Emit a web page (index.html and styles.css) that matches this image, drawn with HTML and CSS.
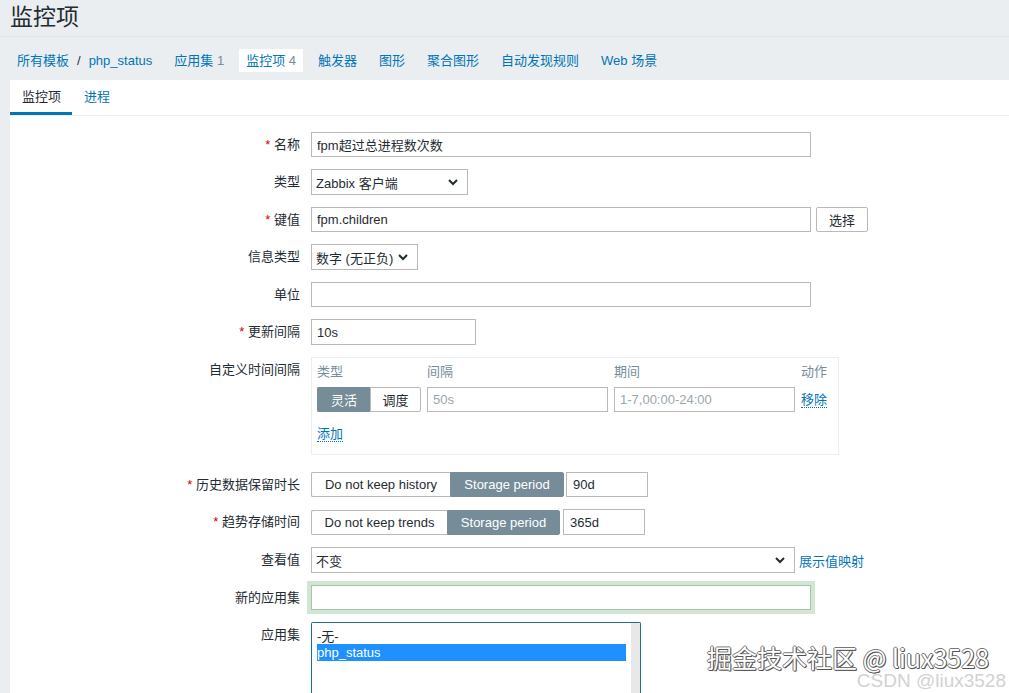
FILE: index.html
```html
<!DOCTYPE html>
<html lang="zh">
<head>
<meta charset="utf-8">
<title>监控项</title>
<link rel="stylesheet" href="styles.css">
</head>
<body>
<header class="page-header">
  <h1 class="page-title">监控项</h1>
</header>
<nav class="subnav">
  <div class="nav-item crumbs"><a class="link" href="#">所有模板</a><span class="sep">/</span><a class="link" href="#">php_status</a></div>
  <div class="nav-item"><a class="link" href="#">应用集</a> <span class="count">1</span></div>
  <div class="nav-item active"><a class="link" href="#">监控项</a> <span class="count">4</span></div>
  <div class="nav-item"><a class="link" href="#">触发器</a></div>
  <div class="nav-item"><a class="link" href="#">图形</a></div>
  <div class="nav-item"><a class="link" href="#">聚合图形</a></div>
  <div class="nav-item"><a class="link" href="#">自动发现规则</a></div>
  <div class="nav-item"><a class="link" href="#">Web 场景</a></div>
</nav>
<main class="panel">
  <div class="tabs">
    <div class="tab tab-active">监控项</div>
    <div class="tab"><a class="link" href="#">进程</a></div>
  </div>
  <form class="form">
    <label class="lbl"><span class="req">*</span> 名称</label>
    <div class="field"><input class="inp w500" type="text" value="fpm超过总进程数次数"></div>

    <label class="lbl">类型</label>
    <div class="field"><div class="sel w157"><span>Zabbix 客户端</span><svg class="chev" width="10" height="7" viewBox="0 0 10 7"><polyline points="1,1 5,5 9,1" fill="none" stroke="#1f2c33" stroke-width="2"/></svg></div></div>

    <label class="lbl"><span class="req">*</span> 键值</label>
    <div class="field row"><input class="inp w500" type="text" value="fpm.children"><button type="button" class="btn">选择</button></div>

    <label class="lbl">信息类型</label>
    <div class="field"><div class="sel w107"><span>数字 (无正负)</span><svg class="chev" width="10" height="7" viewBox="0 0 10 7"><polyline points="1,1 5,5 9,1" fill="none" stroke="#1f2c33" stroke-width="2"/></svg></div></div>

    <label class="lbl">单位</label>
    <div class="field"><input class="inp w500" type="text" value=""></div>

    <label class="lbl"><span class="req">*</span> 更新间隔</label>
    <div class="field"><input class="inp w165 h26" type="text" value="10s"></div>

    <label class="lbl">自定义时间间隔</label>
    <div class="field gap-after">
      <div class="intervals">
        <div class="ih">类型</div><div class="ih">间隔</div><div class="ih">期间</div><div class="ih">动作</div>
        <div class="seg seg-small"><span class="seg-btn on w53">灵活</span><span class="seg-btn w51">调度</span></div>
        <input class="inp ph" type="text" placeholder="50s">
        <input class="inp ph" type="text" placeholder="1-7,00:00-24:00">
        <div class="act"><a class="link dotted" href="#">移除</a></div>
        <div class="add"><a class="link dotted" href="#">添加</a></div>
      </div>
    </div>

    <label class="lbl"><span class="req">*</span> 历史数据保留时长</label>
    <div class="field row2"><div class="seg"><span class="seg-btn w139">Do not keep history</span><span class="seg-btn on w114">Storage period</span></div><input class="inp w82" type="text" value="90d"></div>

    <label class="lbl"><span class="req">*</span> 趋势存储时间</label>
    <div class="field row3"><div class="seg h26"><span class="seg-btn w136">Do not keep trends</span><span class="seg-btn on w113">Storage period</span></div><input class="inp w82 h26" type="text" value="365d"></div>

    <label class="lbl">查看值</label>
    <div class="field row"><div class="sel w484"><span>不变</span><svg class="chev" width="10" height="7" viewBox="0 0 10 7"><polyline points="1,1 5,5 9,1" fill="none" stroke="#1f2c33" stroke-width="2"/></svg></div><a class="link" href="#">展示值映射</a></div>

    <label class="lbl">新的应用集</label>
    <div class="field"><input class="inp w500 focus" type="text" value=""></div>

    <label class="lbl">应用集</label>
    <div class="field">
      <div class="listbox">
        <div class="options">
          <div class="opt">-无-</div>
          <div class="opt selected">php_status</div>
        </div>
        <div class="scrolltrack"></div>
      </div>
    </div>
  </form>
</main>
<div class="watermark">
  <div class="wm-main">掘金技术社区 @ liux3528</div>
  <div class="wm-sub">CSDN @liux3528</div>
</div>
</body>
</html>
```
FILE: styles.css
```css
* { box-sizing: border-box; }
html, body { height: 693px; }
body {
  margin: 0;
  background: #ebeef0;
  font-family: "Liberation Sans", Arial, "Noto Sans CJK SC", sans-serif;
  font-size: 13px;
  color: #1f2c33;
  overflow: hidden;
  position: relative;
}
.link { color: #0275b8; text-decoration: none; }
.dotted { border-bottom: 1px dotted #0275b8; }

.page-header {
  height: 37px;
  border-bottom: 1px solid #dfe4e7;
  padding-left: 10px;
}
.page-title {
  margin: 0;
  font-weight: normal;
  font-size: 23px;
  line-height: 34px;
  color: #1f2c33;
}

.subnav {
  display: flex;
  gap: 8px;
  padding: 12px 0 7px 10px;
  height: 43px;
}
.nav-item {
  height: 23px;
  line-height: 23px;
  padding: 0 7px;
  white-space: nowrap;
}
.nav-item.active { background: #fff; }
.count { color: #768d99; }
.crumbs .sep { color: #1f2c33; margin: 0 8px; }

.panel {
  margin-left: 10px;
  background: #fff;
  height: 613px;
  overflow: hidden;
}
.tabs {
  display: flex;
  border-bottom: 1px solid #ebeef0;
}
.tab {
  height: 35px;
  line-height: 33px;
  padding: 0 11px 0 12px;
  border-bottom: 3px solid transparent;
}
.tab-active { border-bottom-color: #0275b8; color: #1f2c33; }

.form {
  display: grid;
  grid-template-columns: 290px 1fr;
  column-gap: 11px;
  row-gap: 12px;
  padding-top: 16px;
  align-items: start;
}
.lbl {
  text-align: right;
  line-height: 25px;
  white-space: nowrap;
}
.req { color: #d40000; }
.field { display: flex; align-items: center; }
.field.row { gap: 5px; }
.field.row .link { margin-left: -1px; }
.field.row2 { gap: 2px; }
.field.row3 { gap: 3px; }
.gap-after { margin-bottom: 5px; }

.inp {
  height: 25px;
  border: 1px solid #b9b9b9;
  border-radius: 0;
  padding: 0 5px;
  font: inherit;
  color: #1f2c33;
  background: #fff;
  outline: none;
}
.inp::placeholder { color: #9aa6ad; }
.h26 { height: 26px; }
.w500 { width: 500px; }
.w165 { width: 165px; }
.w82 { width: 82px; padding-left: 6px; }

.sel {
  height: 26px;
  border: 1px solid #b9b9b9;
  display: flex;
  align-items: center;
  justify-content: space-between;
  padding: 0 9px 0 4px;
  background: #fff;
  white-space: nowrap;
}
.w157 { width: 157px; }
.w107 { width: 107px; }
.w484 { width: 484px; }
.chev { flex: none; margin-top: 1px; }

.btn {
  height: 25px;
  width: 52px;
  background: #fff;
  border: 1px solid #b9b9b9;
  border-radius: 2px;
  font: inherit;
  color: #1f2c33;
  padding: 0;
}

.intervals {
  width: 528px;
  border: 1px solid #ebeef0;
  padding: 4px 5px 10px 5px;
  display: grid;
  grid-template-columns: 104px 181px 181px auto;
  column-gap: 6px;
  row-gap: 5px;
}
.ih { line-height: 20px; color: #768d99; }
.intervals .inp { width: 181px; }
.act { line-height: 25px; }
.add { grid-column: 1 / -1; line-height: 20px; margin-top: 7px; }

.seg {
  display: flex;
  height: 25px;
}
.seg-btn {
  height: 100%;
  border: 1px solid #b9b9b9;
  display: flex;
  align-items: center;
  justify-content: center;
  background: #fff;
  white-space: nowrap;
}
.seg-btn:first-child { border-radius: 2px 0 0 2px; border-right: none; }
.seg-btn:last-child { border-radius: 0 2px 2px 0; }
.seg-btn.on { background: #768d99; border-color: #768d99; color: #fff; }
.w53 { width: 53px; }
.w51 { width: 51px; }
.w139 { width: 139px; }
.w114 { width: 114px; }
.w136 { width: 136px; }
.w113 { width: 113px; }

.inp.focus {
  border-color: #a9c2ab;
  box-shadow: 0 0 0 4px #d2e7d3;
}

.listbox {
  width: 330px;
  height: 80px;
  border: 1px solid #1f6f88;
  border-bottom: none;
  border-radius: 2px 2px 0 0;
  display: flex;
  padding: 6px 0 0 5px;
}
.options { width: 310px; }
.opt { line-height: 15px; height: 15px; white-space: nowrap; }
.opt.selected { background: #1e90ff; color: #fff; height: 17px; line-height: 17px; }
.scrolltrack {
  width: 9px;
  margin-left: 5px;
  margin-top: -6px;
  background: #e8e8e8;
}

.watermark {
  position: absolute;
  right: 3px;
  top: 643px;
  text-align: right;
  pointer-events: none;
}
.wm-main {
  font-family: "Noto Sans CJK SC", "Liberation Sans", sans-serif;
  font-size: 25px;
  line-height: 28px;
  height: 28px;
  color: #fff;
  margin-right: 17px;
  white-space: nowrap;
  text-shadow: 1px 1px 0 #555, -1px 0 0 #777, 0 -1px 0 #777, 1px 0 0 #666, 0 1px 0 #666;
}
.wm-sub {
  font-family: "Liberation Sans", Arial, sans-serif;
  font-size: 19px;
  line-height: 20px;
  color: #d2d2d2;
  white-space: nowrap;
}
```
